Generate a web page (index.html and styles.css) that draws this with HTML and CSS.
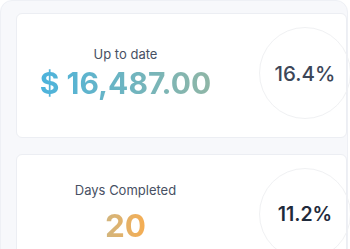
FILE: index.html
```html
<!DOCTYPE html>
<html lang="en">
  <head>
    <meta charset="UTF-8" />
    <meta name="viewport" content="width=device-width, initial-scale=1.0" />
    <title>Progress</title>
    <link rel="stylesheet" href="styles.css">
  </head>
  <body>
    <div class="panel">
      <div class="card">
        <div class="stat">
          <p class="label">Up to date</p>
          <p class="value value-money">$ 16,487.00</p>
        </div>
        <div class="ring">
          <span class="percent">16.4%</span>
        </div>
      </div>
      <div class="card">
        <div class="stat">
          <p class="label">Days Completed</p>
          <p class="value value-days">20</p>
        </div>
        <div class="ring">
          <span class="percent percent-dark">11.2%</span>
        </div>
      </div>
    </div>
  </body>
</html>
```

FILE: styles.css
```css
* {
  margin: 0;
  padding: 0;
  box-sizing: border-box;
}

body {
  background-color: #ffffff;
  font-family: Inter, "Noto Sans", sans-serif;
  overflow: hidden;
}

.panel {
  width: 348px;
  background-color: #f7f8fb;
  border: 1px solid #eef0f5;
  border-radius: 12px;
  padding: 12px 0 12px 15px;
  display: flex;
  flex-direction: column;
  gap: 16px;
}

.card {
  width: 331px;
  height: 125px;
  background-color: #ffffff;
  border: 1px solid #eceef3;
  border-radius: 6px;
  display: flex;
  align-items: flex-start;
  padding-top: 13px;
}

.stat {
  width: 217px;
  height: 90px;
  flex-shrink: 0;
  display: flex;
  flex-direction: column;
  justify-content: center;
  align-items: center;
  gap: 3px;
}

.label {
  font-size: 13px;
  line-height: 18px;
  color: #475063;
}

.value {
  font-size: 30px;
  line-height: 34px;
  font-weight: 700;
  background-clip: text;
  -webkit-background-clip: text;
  color: transparent;
}

.value-money {
  background-image: linear-gradient(90deg, #4cb3dc, #8fb6a6);
}

.value-days {
  font-size: 31.5px;
  line-height: 40px;
  padding-top: 4px;
  background-image: linear-gradient(90deg, #d1b57e, #f6ad52);
}

.ring {
  width: 92px;
  height: 92px;
  margin-left: 25px;
  flex-shrink: 0;
  border: 1px solid #f0f1f3;
  border-radius: 50%;
  display: flex;
  justify-content: center;
  align-items: center;
}

.percent {
  font-size: 20.5px;
  font-weight: 500;
  color: #3c4658;
}

.percent-dark {
  font-size: 19.5px;
  font-weight: 600;
  color: #1f2a3b;
}
```
